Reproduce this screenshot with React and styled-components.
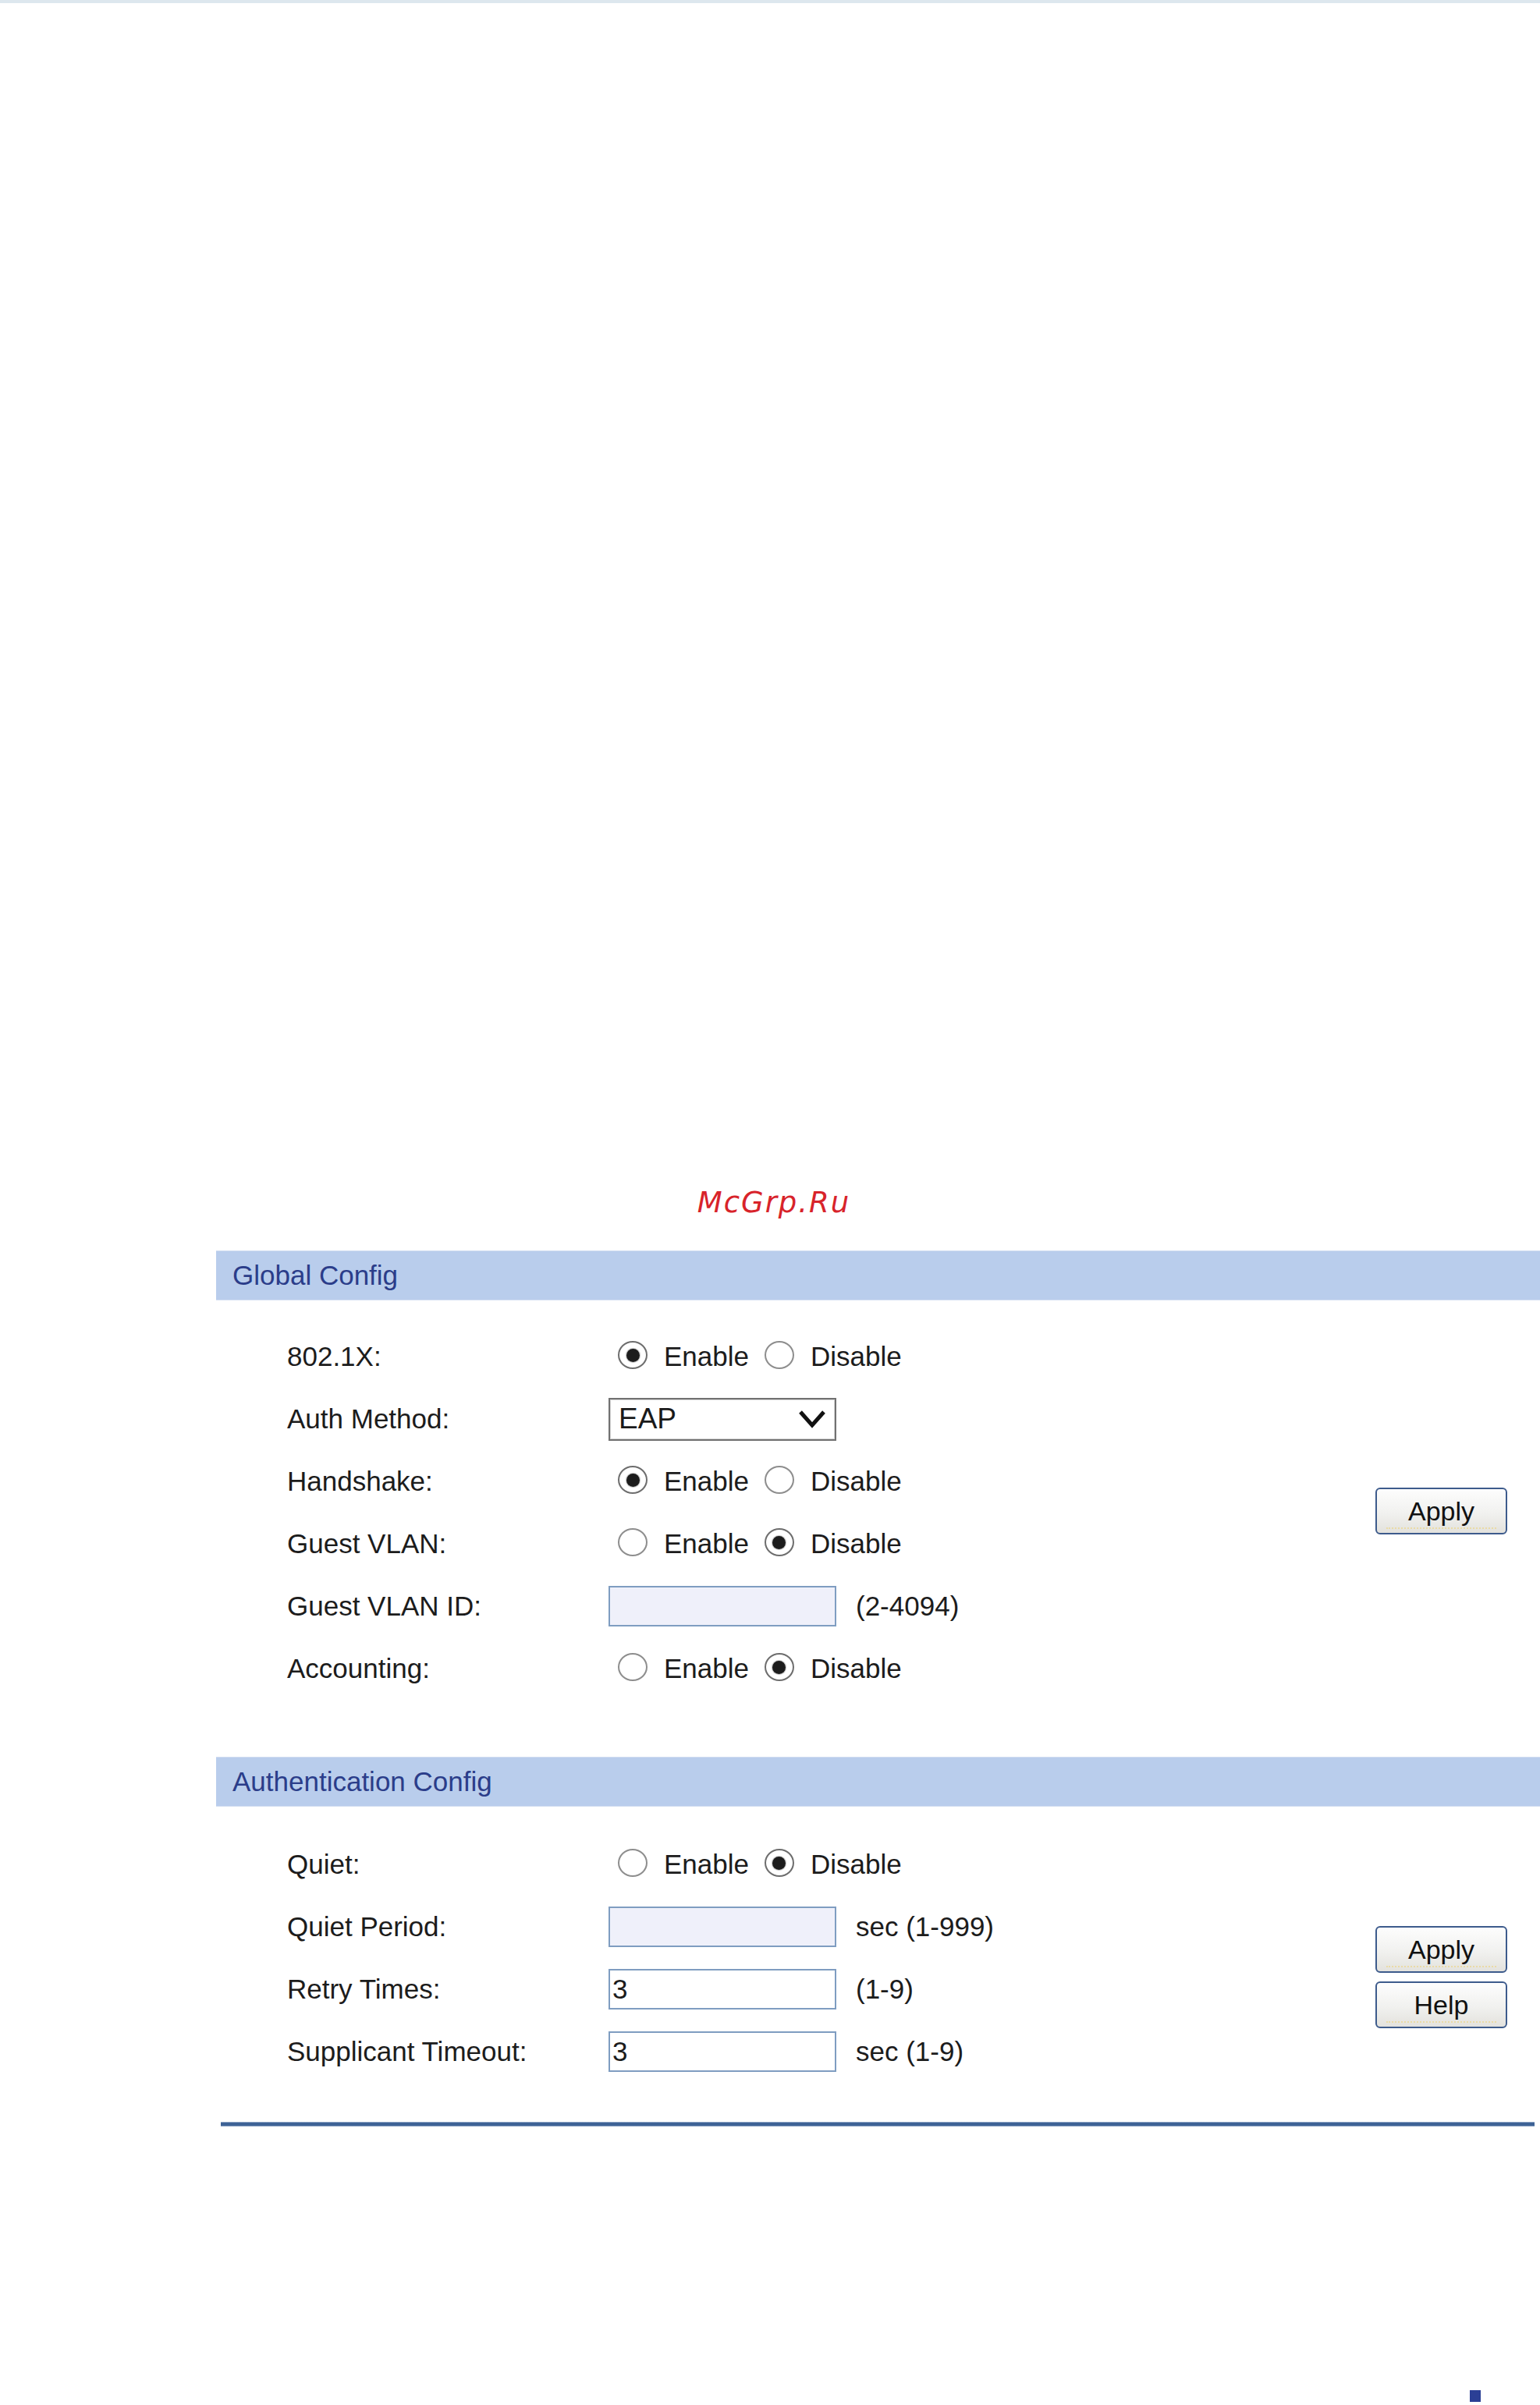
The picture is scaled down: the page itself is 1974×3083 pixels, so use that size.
import React from "react";
import styled, { createGlobalStyle } from "styled-components";

const GlobalStyle = createGlobalStyle`
  html, body { margin: 0; padding: 0; background: #ffffff; }
  body { font-family: "Liberation Sans", Arial, sans-serif; }
  * { box-sizing: border-box; }
`;

const Page = styled.div`
  height: 3083px;
  display: flex;
  flex-direction: column;
  background: #ffffff;
  overflow: hidden;
`;

const TopBand = styled.div`
  flex: none;
  height: 4px;
  background: #dde7ee;
`;

const Watermark = styled.div`
  margin-top: 1516px;
  padding-left: 10px;
  height: 44px;
  line-height: 44px;
  text-align: center;
  font-family: "DejaVu Sans", "Liberation Sans", sans-serif;
  font-style: italic;
  font-size: 37px;
  letter-spacing: 2px;
  color: #d8232a;
`;

const Panel = styled.div`
  margin-top: 39px;
  margin-left: 277px;
  display: flex;
  flex-direction: column;
`;

const SectionHeader = styled.div`
  height: 64px;
  display: flex;
  align-items: center;
  padding-left: 21px;
  background: #b9cdec;
  border-top: 1px solid #d2ddf1;
  border-bottom: 1px solid #d2ddf1;
  color: #2b3d8a;
  font-size: 35px;
`;

const SectionBody = styled.div`
  display: flex;
  padding-top: ${(p) => p.$top}px;
  padding-bottom: ${(p) => p.$bottom}px;
`;

const Rows = styled.div`
  flex: 1;
  display: flex;
  flex-direction: column;
  padding-left: 91px;
`;

const Row = styled.div`
  height: 80px;
  display: grid;
  grid-template-columns: 412px 1fr;
  align-items: center;
`;

const Label = styled.span`
  font-size: 35px;
  color: #1c1c1c;
  white-space: nowrap;
`;

const Control = styled.div`
  display: flex;
  align-items: center;
`;

const RadioGroup = styled.div`
  display: flex;
  align-items: center;
  padding-left: 12px;
`;

const Option = styled.label`
  display: flex;
  align-items: center;
  gap: 21px;
  font-size: 35px;
  color: #1c1c1c;
  & + & { margin-left: 20px; }
`;

const RadioCircle = styled.span`
  flex: none;
  width: 38px;
  height: 36px;
  margin-top: -4px;
  border-radius: 50%;
  border: 2px solid ${(p) => (p.$checked ? "#6e6e6e" : "#8e8e8e")};
  background: #ffffff;
  display: flex;
  align-items: center;
  justify-content: center;
  &::after {
    content: "";
    display: ${(p) => (p.$checked ? "block" : "none")};
    width: 17px;
    height: 17px;
    border-radius: 50%;
    background: #1c1c1c;
    box-shadow: 0 0 1px 1px rgba(0, 0, 0, 0.25);
  }
`;

const SelectBox = styled.div`
  width: 292px;
  height: 55px;
  display: flex;
  align-items: center;
  justify-content: space-between;
  padding: 0 12px 0 11px;
  border: 2px solid #717171;
  box-shadow: inset 0 0 0 1px #d4d4d4;
  background: #ffffff;
  font-size: 37px;
  color: #1a1a1a;
`;

const TextInput = styled.input`
  width: 292px;
  height: 52px;
  margin: 0;
  padding: 0 0 0 3px;
  border: 2px solid #7f9dc1;
  border-radius: 0;
  background: ${(p) => (p.disabled ? "#eff0fa" : "#ffffff")};
  font-family: "Liberation Sans", Arial, sans-serif;
  font-size: 35px;
  color: #1c1c1c;
  outline: none;
`;

const Hint = styled.span`
  margin-left: 25px;
  font-size: 35px;
  color: #1c1c1c;
  white-space: nowrap;
`;

const ButtonCol = styled.div`
  flex: none;
  display: flex;
  flex-direction: column;
  gap: 11px;
  padding-top: ${(p) => p.$offset}px;
  padding-right: 42px;
`;

const Button = styled.button`
  position: relative;
  width: 169px;
  height: 60px;
  margin: 0;
  padding: 0;
  border: 2px solid #3d5b8c;
  border-radius: 6px;
  background: linear-gradient(#fdfdfd, #f1f1ef 55%, #e3e2dd);
  font-family: "Liberation Sans", Arial, sans-serif;
  font-size: 34px;
  color: #111111;
  &::after {
    content: "";
    position: absolute;
    left: 12px;
    right: 12px;
    bottom: 5px;
    border-bottom: 2px dotted #eadba6;
  }
`;

const BottomLine = styled.div`
  height: 6px;
  margin: 50px 7px 0 6px;
  background: linear-gradient(#b3c3da, #3d6296 25%, #3d6296 75%, #b3c3da);
`;

const Footer = styled.div`
  margin-top: auto;
  display: flex;
  justify-content: flex-end;
  padding: 0 76px 4px 0;
`;

const PageMark = styled.div`
  width: 14px;
  height: 15px;
  background: #2b3f95;
`;

const Chevron = () => (
  <svg width="34" height="24" viewBox="0 0 34 24">
    <polyline
      points="2,3 17,20 32,3"
      fill="none"
      stroke="#111"
      strokeWidth="5"
      strokeLinejoin="miter"
    />
  </svg>
);

const Radios = ({ value }) => (
  <RadioGroup>
    <Option>
      <RadioCircle $checked={value === "enable"} />
      Enable
    </Option>
    <Option>
      <RadioCircle $checked={value === "disable"} />
      Disable
    </Option>
  </RadioGroup>
);

export default function App() {
  return (
    <>
      <GlobalStyle />
      <Page>
        <TopBand />
        <Watermark>McGrp.Ru</Watermark>
        <Panel>
          <SectionHeader>Global Config</SectionHeader>
          <SectionBody $top={32} $bottom={73}>
            <Rows>
              <Row>
                <Label>802.1X:</Label>
                <Control><Radios value="enable" /></Control>
              </Row>
              <Row>
                <Label>Auth Method:</Label>
                <Control>
                  <SelectBox>
                    <span>EAP</span>
                    <Chevron />
                  </SelectBox>
                </Control>
              </Row>
              <Row>
                <Label>Handshake:</Label>
                <Control><Radios value="enable" /></Control>
              </Row>
              <Row>
                <Label>Guest VLAN:</Label>
                <Control><Radios value="disable" /></Control>
              </Row>
              <Row>
                <Label>Guest VLAN ID:</Label>
                <Control>
                  <TextInput disabled defaultValue="" />
                  <Hint>(2-4094)</Hint>
                </Control>
              </Row>
              <Row>
                <Label>Accounting:</Label>
                <Control><Radios value="disable" /></Control>
              </Row>
            </Rows>
            <ButtonCol $offset={208}>
              <Button>Apply</Button>
            </ButtonCol>
          </SectionBody>

          <SectionHeader>Authentication Config</SectionHeader>
          <SectionBody $top={34} $bottom={0}>
            <Rows>
              <Row>
                <Label>Quiet:</Label>
                <Control><Radios value="disable" /></Control>
              </Row>
              <Row>
                <Label>Quiet Period:</Label>
                <Control>
                  <TextInput disabled defaultValue="" />
                  <Hint>sec (1-999)</Hint>
                </Control>
              </Row>
              <Row>
                <Label>Retry Times:</Label>
                <Control>
                  <TextInput defaultValue="3" />
                  <Hint>(1-9)</Hint>
                </Control>
              </Row>
              <Row>
                <Label>Supplicant Timeout:</Label>
                <Control>
                  <TextInput defaultValue="3" />
                  <Hint>sec (1-9)</Hint>
                </Control>
              </Row>
            </Rows>
            <ButtonCol $offset={119}>
              <Button>Apply</Button>
              <Button>Help</Button>
            </ButtonCol>
          </SectionBody>
          <BottomLine />
        </Panel>
        <Footer>
          <PageMark />
        </Footer>
      </Page>
    </>
  );
}
